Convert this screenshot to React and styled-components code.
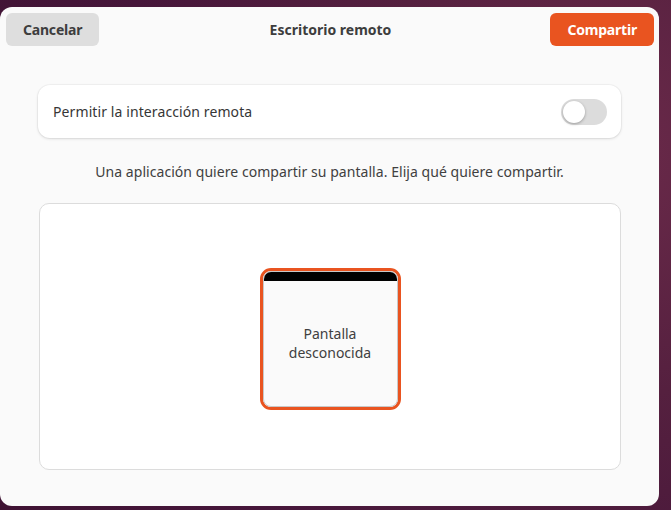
import React from 'react'
import styled, { createGlobalStyle } from 'styled-components'

const GlobalStyle = createGlobalStyle`
  html, body {
    margin: 0;
    padding: 0;
  }
  body {
    width: 671px;
    height: 510px;
    overflow: hidden;
    background: radial-gradient(circle at 90% 30%, #6b2a4a 0%, #55203f 35%, #46163a 70%, #3f1333 100%);
    font-family: "Noto Sans", "DejaVu Sans", sans-serif;
  }
`

const Dialog = styled.div`
  margin-top: 7px;
  width: 659px;
  height: 499px;
  background: #fafafa;
  border-radius: 12px;
  box-sizing: border-box;
  display: flex;
  flex-direction: column;
`

const HeaderBar = styled.div`
  display: grid;
  grid-template-columns: 1fr auto 1fr;
  align-items: center;
  padding: 6px 5px 0 6px;
  height: 33px;
`

const Button = styled.button`
  justify-self: ${p => (p.$primary ? 'end' : 'start')};
  height: 33px;
  padding: 0 ${p => p.$pad}px;
  border: none;
  border-radius: 6px;
  font-family: inherit;
  font-weight: 700;
  font-size: 14px;
  letter-spacing: -0.2px;
  color: ${p => (p.$primary ? '#ffffff' : '#3d3d3d')};
  background: ${p => (p.$primary ? '#e95420' : '#dedede')};
`

const Title = styled.div`
  font-weight: 700;
  font-size: 14px;
  color: #3d3d3d;
  margin-left: 1px;
`

const Content = styled.div`
  display: flex;
  flex-direction: column;
  padding: 39px 38px 0 38px;
`

const ToggleCard = styled.div`
  height: 53px;
  background: #ffffff;
  border-radius: 12px;
  box-shadow: 0 0 0 1px rgba(0, 0, 0, 0.03), 0 1px 3px rgba(0, 0, 0, 0.12);
  display: flex;
  align-items: center;
  justify-content: space-between;
  padding: 0 14px 0 15px;
`

const Label = styled.span`
  font-size: 14px;
  letter-spacing: 0.1px;
  color: #363636;
`

const Switch = styled.div`
  width: 46px;
  height: 26px;
  border-radius: 13px;
  background: #dcdcdc;
  position: relative;
`

const Knob = styled.div`
  position: absolute;
  top: 2px;
  left: 2px;
  width: 22px;
  height: 22px;
  border-radius: 50%;
  background: #ffffff;
  box-shadow: 0 1px 3px rgba(0, 0, 0, 0.3);
`

const Hint = styled.p`
  margin: 24px 0 22px;
  text-align: center;
  font-size: 14px;
  letter-spacing: 0.05px;
  color: #404040;
`

const Panel = styled.div`
  margin-left: 1px;
  height: 267px;
  padding-top: 5px;
  background: #ffffff;
  border: 1px solid #dcdcdc;
  border-radius: 10px;
  box-sizing: border-box;
  display: flex;
  align-items: center;
  justify-content: center;
`

const Monitor = styled.div`
  width: 141px;
  height: 142px;
  box-sizing: border-box;
  border: 3px solid #e95420;
  border-radius: 11px;
  display: flex;
`

const Screen = styled.div`
  flex: 1;
  border: 1px solid #c8c8c8;
  border-radius: 8px;
  overflow: hidden;
  background: #fafafa;
  display: flex;
  flex-direction: column;
`

const TopStrip = styled.div`
  height: 9px;
  background: #000000;
`

const ScreenName = styled.div`
  flex: 1;
  display: flex;
  align-items: center;
  justify-content: center;
  text-align: center;
  font-size: 14px;
  line-height: 19px;
  color: #404040;
  padding-bottom: 2px;
`

export default function App() {
  return (
    <>
      <GlobalStyle />
      <Dialog>
        <HeaderBar>
          <Button $pad={17}>Cancelar</Button>
          <Title>Escritorio remoto</Title>
          <Button $primary $pad={17}>Compartir</Button>
        </HeaderBar>
        <Content>
          <ToggleCard>
            <Label>Permitir la interacción remota</Label>
            <Switch>
              <Knob />
            </Switch>
          </ToggleCard>
          <Hint>Una aplicación quiere compartir su pantalla. Elija qué quiere compartir.</Hint>
          <Panel>
            <Monitor>
              <Screen>
                <TopStrip />
                <ScreenName>
                  Pantalla
                  <br />
                  desconocida
                </ScreenName>
              </Screen>
            </Monitor>
          </Panel>
        </Content>
      </Dialog>
    </>
  )
}
